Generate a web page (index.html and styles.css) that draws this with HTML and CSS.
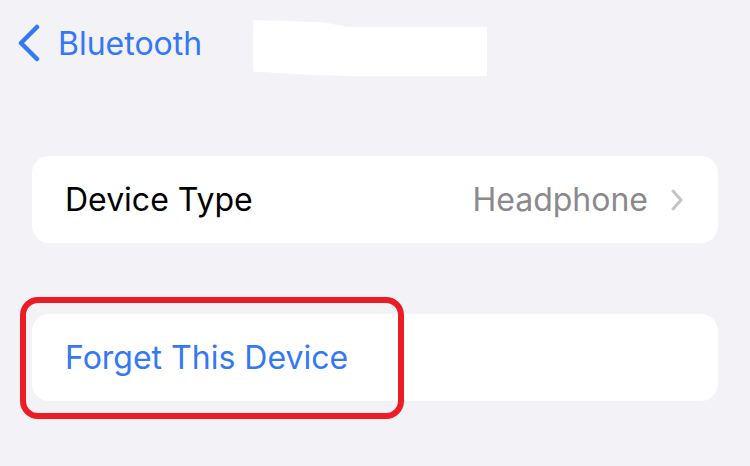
FILE: index.html
```html
<!DOCTYPE html>
<html lang="en">
<head>
    <meta charset="UTF-8">
    <meta name="viewport" content="width=device-width, initial-scale=1.0">
    <title>Device</title>
    <link rel="stylesheet" href="styles.css">
</head>
<body>
    <div class="nav">
        <a class="back" href="#">
            <svg class="back-icon" width="26" height="38" viewBox="0 0 26 38">
                <path d="M21 3 L5 19 L21 35" fill="none" stroke="#3478f6" stroke-width="4.5" stroke-linecap="round" stroke-linejoin="round"/>
            </svg>
            <span>Bluetooth</span>
        </a>
        <div class="redacted"></div>
    </div>

    <div class="group">
        <div class="row">
            <span class="label">Device Type</span>
            <span class="value">Headphone</span>
            <svg class="chevron" width="14" height="24" viewBox="0 0 14 24">
                <path d="M3 3 L11 12 L3 21" fill="none" stroke="#c4c4c7" stroke-width="3" stroke-linecap="round" stroke-linejoin="round"/>
            </svg>
        </div>
    </div>

    <div class="group group-action">
        <div class="row">
            <span class="action">Forget This Device</span>
        </div>
        <!-- annotation drawn on top of the screenshot -->
        <div class="highlight"></div>
    </div>
</body>
</html>
```

FILE: styles.css
```css
body {
    margin: 0;
    background-color: #f2f2f7;
    font-family: "Inter", "Liberation Sans", Arial, sans-serif;
    width: 750px;
    height: 466px;
    overflow: hidden;
}
.nav {
    display: flex;
    align-items: center;
    height: 86px;
    padding-left: 16px;
}
.back {
    display: flex;
    align-items: center;
    gap: 16px;
    color: #3478f6;
    text-decoration: none;
    font-size: 32px;
}
.back-icon {
    display: block;
}
.redacted {
    width: 234px;
    height: 56px;
    margin-left: 51px;
    margin-top: 10px;
    background-color: #ffffff;
    clip-path: polygon(0 0, 30% 4%, 40% 12%, 100% 12%, 100% 100%, 42% 100%, 25% 98%, 0 92%);
}
.group {
    margin: 70px 32px 0 32px;
    background-color: #ffffff;
    border-radius: 17px;
}
.group-action {
    position: relative;
    margin-top: 71px;
}
.row {
    display: flex;
    align-items: center;
    height: 87px;
    padding: 0 34px 0 33px;
    font-size: 32px;
}
.label {
    flex: 1;
    color: #000000;
}
.value {
    color: #8a8a8e;
}
.chevron {
    display: block;
    margin-left: 22px;
}
.action {
    color: #3478f6;
}
.highlight {
    position: absolute;
    left: -12px;
    top: -17px;
    width: 372px;
    height: 110px;
    border: 6px solid #ed1c24;
    border-radius: 18px;
}
```
